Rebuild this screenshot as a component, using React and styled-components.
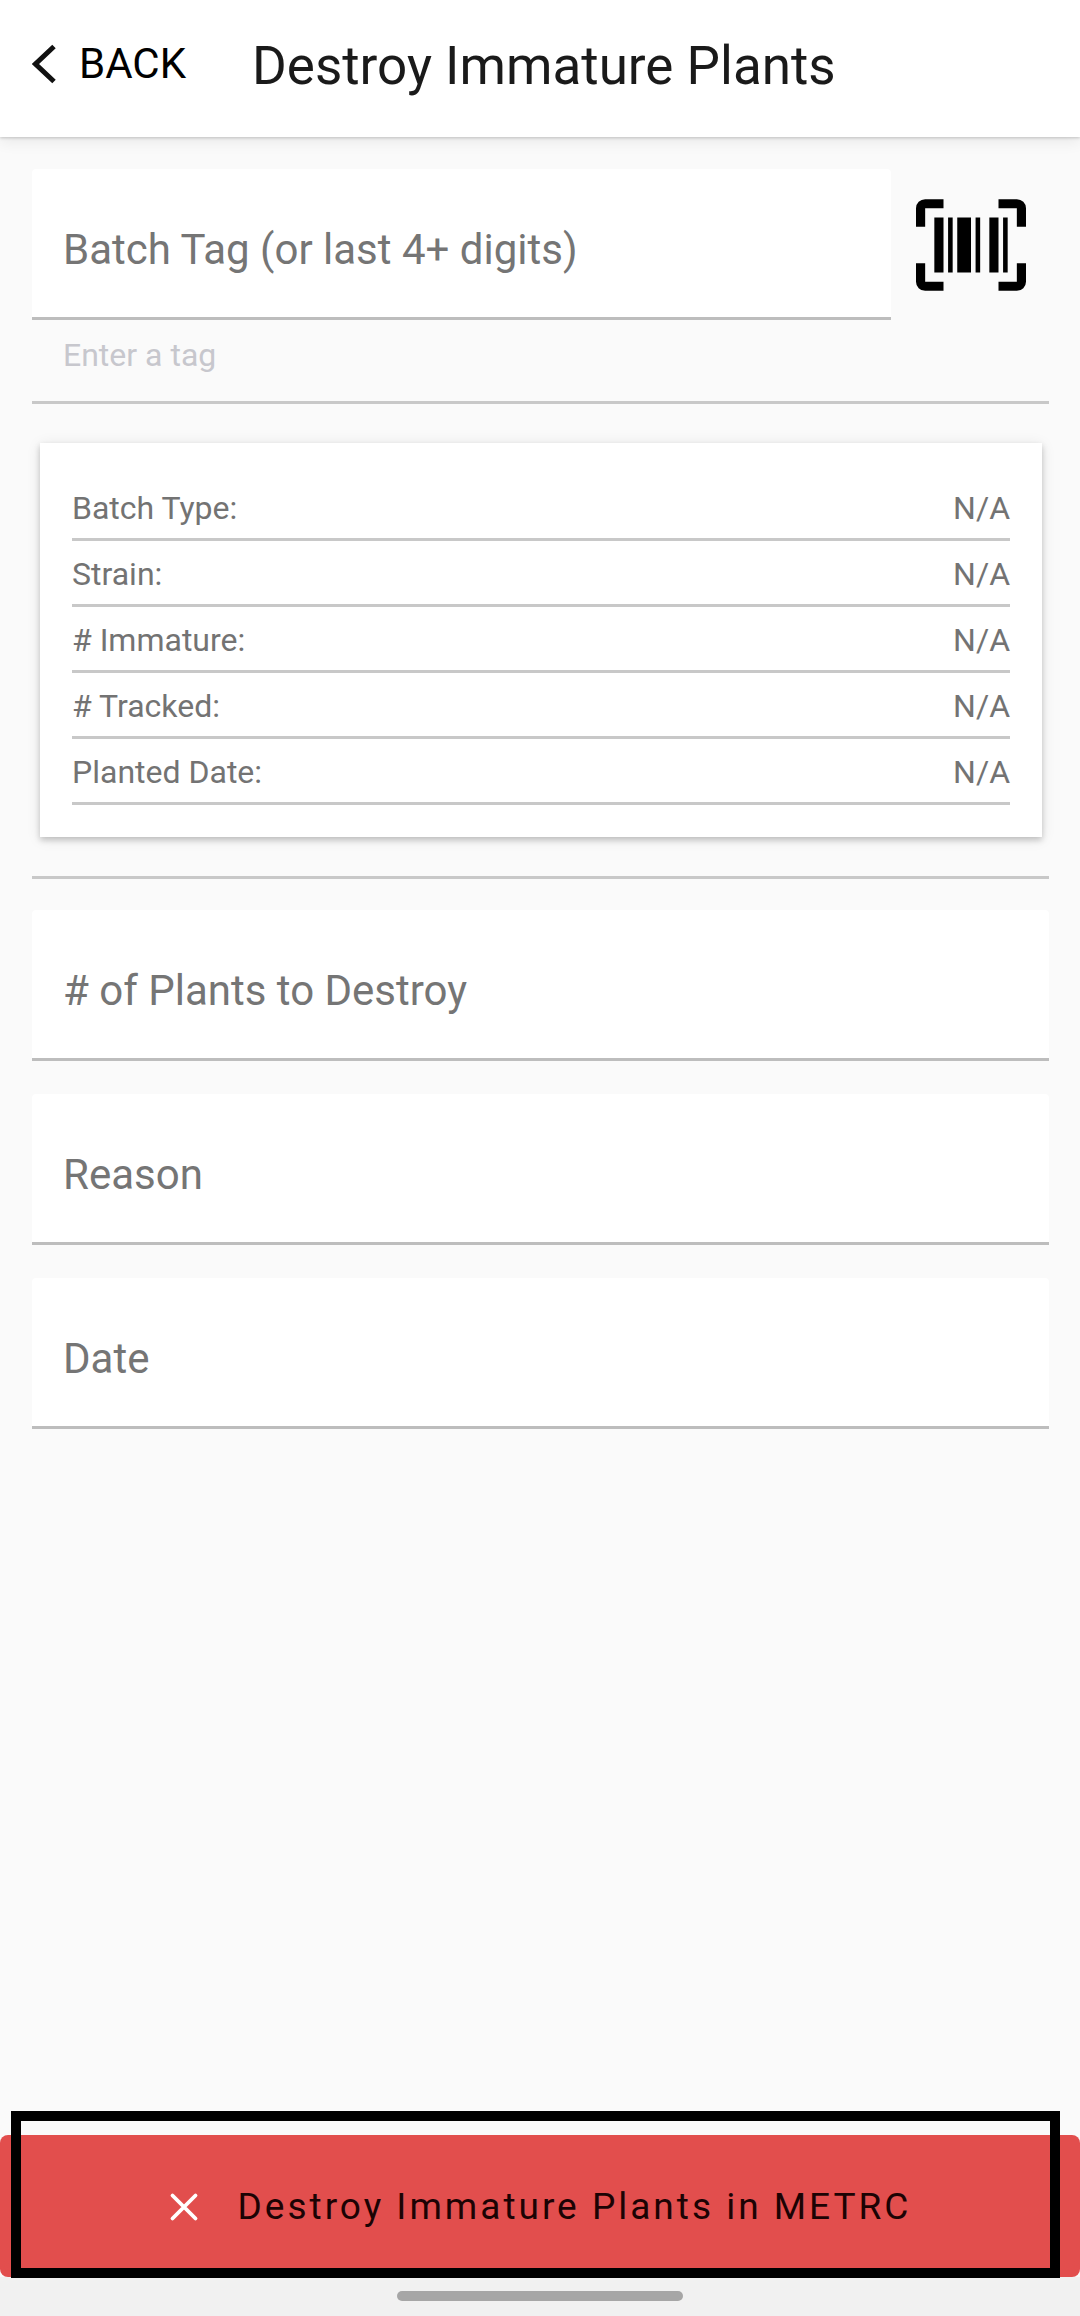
import React from "react";
import styled, { createGlobalStyle } from "styled-components";

const GlobalStyle = createGlobalStyle`
  *, *::before, *::after { box-sizing: border-box; }
  body {
    margin: 0;
    background: #fafafa;
    font-family: Roboto, "Liberation Sans", sans-serif;
  }
`;

const Screen = styled.div`
  display: flex;
  flex-direction: column;
  min-height: 100vh;
`;

const Header = styled.header`
  display: flex;
  align-items: center;
  gap: 66px;
  height: 137px;
  padding: 0 32px 10px;
  background: #ffffff;
  box-shadow: 0 1px 3px rgba(0, 0, 0, 0.2), 0 5px 14px rgba(0, 0, 0, 0.07);
`;

const BackButton = styled.button`
  display: flex;
  align-items: center;
  gap: 22px;
  padding: 0;
  border: 0;
  background: none;
  color: #000000;
  font: 400 42px/50px Roboto, "Liberation Sans", sans-serif;
`;

const Title = styled.h1`
  margin: 0;
  padding-top: 4px;
  color: #1a1a1a;
  font-size: 53px;
  font-weight: 400;
  line-height: 60px;
`;

const Main = styled.main`
  flex: 1;
  padding: 32px 31px 32px 32px;
`;

const TagRow = styled.div`
  display: flex;
`;

const Field = styled.input`
  display: block;
  width: 100%;
  min-width: 0;
  height: 151px;
  padding: 12px 31px 0;
  border: 0;
  border-bottom: 3px solid #bdbdbd;
  border-radius: 4px 4px 0 0;
  outline: 0;
  background: #ffffff;
  color: #1a1a1a;
  font: 400 42px/50px Roboto, "Liberation Sans", sans-serif;

  &::placeholder {
    color: #757575;
    opacity: 1;
  }
`;

const ScanButton = styled.button`
  display: flex;
  flex: none;
  align-items: center;
  justify-content: flex-end;
  width: 158px;
  padding: 0 23px 0 0;
  border: 0;
  background: none;
  color: #000000;
`;

const Hint = styled.p`
  margin: 0;
  padding: 16px 31px 27px;
  border-bottom: 3px solid #c8c8c8;
  color: #c7c7cd;
  font-size: 32px;
  line-height: 38px;
`;

const Summary = styled.section`
  padding: 39px 7px 39px 8px;
  border-bottom: 3px solid #c8c8c8;
`;

const Card = styled.dl`
  margin: 0;
  padding: 32px;
  background: #ffffff;
  box-shadow: 0 3px 6px rgba(0, 0, 0, 0.2), 0 2px 14px rgba(0, 0, 0, 0.09);
`;

const DetailRow = styled.div`
  display: flex;
  justify-content: space-between;
  padding: 14px 0 11px;
  border-bottom: 3px solid #c8c8c8;
  color: #737373;
  font-size: 32px;
  line-height: 38px;
`;

const DetailName = styled.dt``;

const DetailValue = styled.dd`
  margin: 0;
`;

const FieldStack = styled.div`
  display: flex;
  flex-direction: column;
  gap: 33px;
  padding-top: 31px;
`;

const ActionArea = styled.div`
  position: relative;
`;

const DestroyButton = styled.button`
  display: flex;
  align-items: center;
  justify-content: center;
  gap: 31px;
  width: 100%;
  height: 142px;
  padding: 2px 8px 0 0;
  border: 0;
  border-radius: 8px;
  background: #e24e4d;
  color: #1c0304;
  font: 400 37px/44px Roboto, "Liberation Sans", sans-serif;
  letter-spacing: 3px;
`;

const Highlight = styled.div`
  position: absolute;
  inset: -24px 20px -1px 11px;
  border: 10px solid #000000;
  pointer-events: none;
`;

const SystemBar = styled.footer`
  display: flex;
  justify-content: center;
  height: 39px;
  padding-top: 14px;
  background: #f1f1f1;
`;

const HomeHandle = styled.div`
  width: 286px;
  height: 10px;
  border-radius: 5px;
  background: #a6a6a6;
`;

const ChevronLeft = () => (
  <svg width="25" height="40" viewBox="0 0 25 40" fill="none" aria-hidden="true">
    <path d="M22 2.500L3.500 20L22 37.500" stroke="#111111" strokeWidth="5" />
  </svg>
);

const BarcodeScan = () => (
  <svg width="110" height="110" viewBox="0 0 24 24" fill="currentColor" aria-hidden="true">
    <path d="M4 6H6V18H4ZM7 6H8V18H7ZM9 6H12V18H9ZM13 6H14V18H13ZM16 6H18V18H16ZM19 6H20V18H19ZM2 4V8H0V4A2 2 0 0 1 2 2H6V4ZM22 2A2 2 0 0 1 24 4V8H22V4H18V2ZM2 16V20H6V22H2A2 2 0 0 1 0 20V16ZM22 20V16H24V20A2 2 0 0 1 22 22H18V20Z" />
  </svg>
);

const Cross = () => (
  <svg width="46" height="46" viewBox="0 0 24 24" fill="none" aria-hidden="true">
    <path d="M6 6L18 18M18 6L6 18" stroke="#ffffff" strokeWidth="2" strokeLinecap="round" />
  </svg>
);

const details = [
  ["Batch Type:", "N/A"],
  ["Strain:", "N/A"],
  ["# Immature:", "N/A"],
  ["# Tracked:", "N/A"],
  ["Planted Date:", "N/A"],
];

const fields = ["# of Plants to Destroy", "Reason", "Date"];

export default function App() {
  return (
    <Screen>
      <GlobalStyle />
      <Header>
        <BackButton type="button">
          <ChevronLeft />
          BACK
        </BackButton>
        <Title>Destroy Immature Plants</Title>
      </Header>
      <Main>
        <TagRow>
          <Field
            type="text"
            aria-label="Batch Tag (or last 4+ digits)"
            aria-describedby="tag-hint"
            placeholder="Batch Tag (or last 4+ digits)"
          />
          <ScanButton type="button" aria-label="Scan barcode">
            <BarcodeScan />
          </ScanButton>
        </TagRow>
        <Hint id="tag-hint">Enter a tag</Hint>
        <Summary>
          <Card>
            {details.map(([name, value]) => (
              <DetailRow key={name}>
                <DetailName>{name}</DetailName>
                <DetailValue>{value}</DetailValue>
              </DetailRow>
            ))}
          </Card>
        </Summary>
        <FieldStack>
          {fields.map((name) => (
            <Field key={name} type="text" aria-label={name} placeholder={name} />
          ))}
        </FieldStack>
      </Main>
      <ActionArea>
        <DestroyButton type="button">
          <Cross />
          Destroy Immature Plants in METRC
        </DestroyButton>
        <Highlight />
      </ActionArea>
      <SystemBar>
        <HomeHandle />
      </SystemBar>
    </Screen>
  );
}
